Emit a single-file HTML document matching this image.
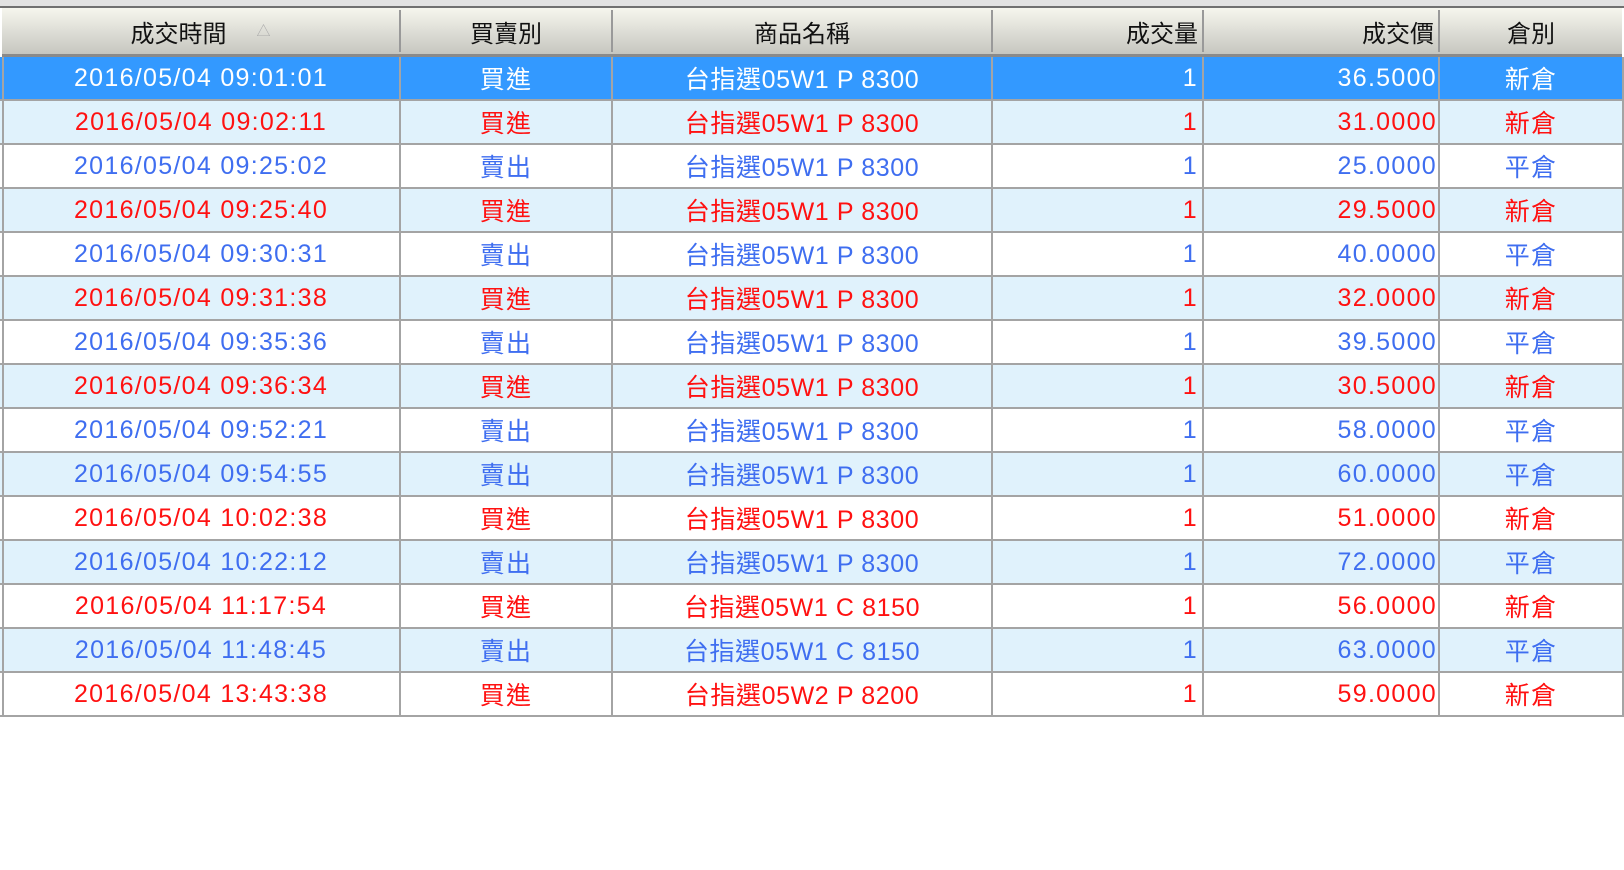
<!DOCTYPE html>
<html><head><meta charset="utf-8"><style>
body{margin:0;width:1624px;height:870px;background:#fff;position:relative;overflow:hidden;font-family:"Liberation Sans","Noto Sans CJK TC",sans-serif;}
.top{position:absolute;left:0;top:0;width:1624px;height:6px;background:#e2e2e2;border-bottom:2px solid #707070;}
.hdr{position:absolute;left:2px;top:8px;width:1620px;height:46px;background:linear-gradient(#f6f6ee,#c6c6c0);border-bottom:3px solid #8a8a8a;}
.row{position:absolute;left:0;width:1624px;height:42px;border-bottom:2px solid #a4a4a4;}
.c{position:absolute;top:0;height:100%;display:flex;align-items:center;font-size:25px;letter-spacing:1.3px;box-sizing:border-box;}
.hdr .c{color:#111;font-size:24px;letter-spacing:0;}
.vl{position:absolute;width:2px;background:#a4a4a4;}
.b{color:#3f6ef0}.r{color:#ff1111}.w{color:#fff}
</style></head><body>
<div class="top"></div>
<div class="hdr">
<div class="c" style="left:0;width:397px;justify-content:center">成交時間<span style="margin-left:30px;font-size:14px;color:#aaa">△</span></div>
<div class="c" style="left:399px;width:210px;justify-content:center">買賣別</div>
<div class="c" style="left:611px;width:378px;justify-content:center">商品名稱</div>
<div class="c" style="left:991px;width:209px;justify-content:flex-end;padding-right:4px">成交量</div>
<div class="c" style="left:1202px;width:234px;justify-content:flex-end;padding-right:4px">成交價</div>
<div class="c" style="left:1438px;width:182px;justify-content:center">倉別</div>
</div>
<div id="rows"></div>
<script>
const d=[
["09:01:01","買進","P 8300","36.5000","新倉","w"],
["09:02:11","買進","P 8300","31.0000","新倉","r"],
["09:25:02","賣出","P 8300","25.0000","平倉","b"],
["09:25:40","買進","P 8300","29.5000","新倉","r"],
["09:30:31","賣出","P 8300","40.0000","平倉","b"],
["09:31:38","買進","P 8300","32.0000","新倉","r"],
["09:35:36","賣出","P 8300","39.5000","平倉","b"],
["09:36:34","買進","P 8300","30.5000","新倉","r"],
["09:52:21","賣出","P 8300","58.0000","平倉","b"],
["09:54:55","賣出","P 8300","60.0000","平倉","b"],
["10:02:38","買進","P 8300","51.0000","新倉","r"],
["10:22:12","賣出","P 8300","72.0000","平倉","b"],
["11:17:54","買進","C 8150","56.0000","新倉","r"],
["11:48:45","賣出","C 8150","63.0000","平倉","b"],
["13:43:38","買進","P 8200","59.0000","新倉","r"]];
let h="";
d.forEach((x,i)=>{
 const bg=i==0?"#3399ff":(i%2?"#e0f2fc":"#fff");
 const w=i==14?"05W2":"05W1";
 h+=`<div class="row ${x[5]}" style="top:${57+44*i}px;background:${bg}">
<div class="c" style="left:3px;width:396px;justify-content:center">2016/05/04 ${x[0]}</div>
<div class="c" style="left:401px;width:210px;justify-content:center">${x[1]}</div>
<div class="c" style="left:613px;width:378px;justify-content:center;letter-spacing:0.6px">台指選${w} ${x[2]}</div>
<div class="c" style="left:993px;width:209px;justify-content:flex-end;padding-right:4px">1</div>
<div class="c" style="left:1204px;width:234px;justify-content:flex-end;padding-right:1px">${x[3]}</div>
<div class="c" style="left:1440px;width:182px;justify-content:center">${x[4]}</div></div>`;
});
[2,399,611,991,1202,1438,1622].forEach(x=>{h+=`<div class="vl" style="left:${x}px;top:57px;height:660px"></div>`;});
[399,611,991,1202,1438].forEach(x=>{h+=`<div class="vl" style="left:${x}px;top:10px;height:42px;background:#999"></div>`;});
document.getElementById("rows").innerHTML=h;
</script>
</body></html>
